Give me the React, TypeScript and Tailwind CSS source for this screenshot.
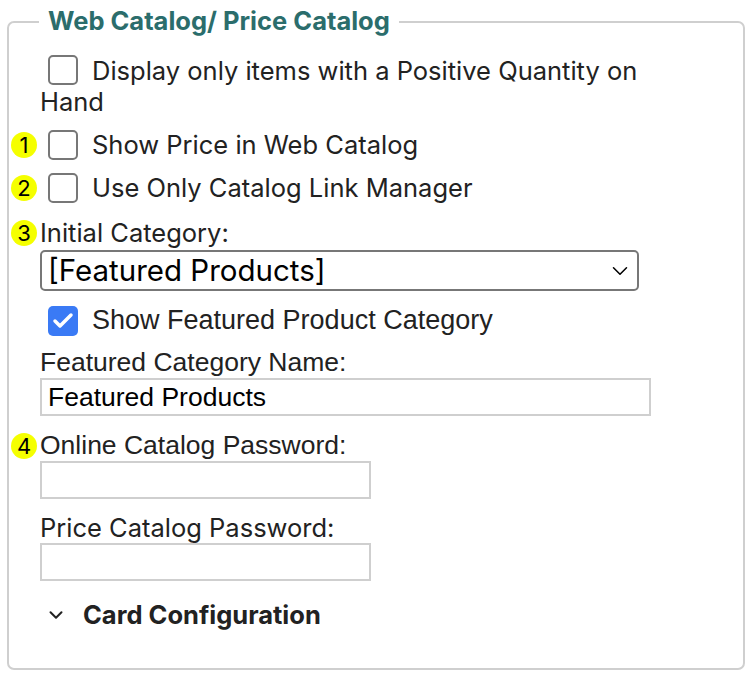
import { Check, ChevronDown } from 'lucide-react'

function Badge({ n }: { n: string }) {
  return (
    <span className="absolute -left-[29px] top-1/2 -translate-y-1/2 w-[26px] h-[26px] rounded-full bg-[#f5ff00] text-black text-[22px] leading-none flex items-center justify-center">
      {n}
    </span>
  )
}

function Box({ checked = false }: { checked?: boolean }) {
  return checked ? (
    <span className="inline-flex w-[30px] h-[30px] rounded-[5px] bg-[#3a7af5] items-center justify-center align-middle">
      <Check className="w-[24px] h-[24px] text-white" strokeWidth={3.5} />
    </span>
  ) : (
    <span className="inline-block w-[30px] h-[30px] rounded-[5px] border-2 border-[#777] bg-white align-middle" />
  )
}

export default function App() {
  return (
    <div className="min-h-screen bg-white text-[#222] font-['Inter',sans-serif] pt-[21px] pl-[7px] pr-[7px]">
      <div className="relative h-[649px] border-2 border-[#cfcfcf] rounded-[7px] pl-[31px] pr-4">
        {/* legend */}
        <div className="absolute left-[30px] -top-[17px] bg-white px-[9px] text-[25.5px] font-bold text-[#2b6d6c] leading-[30px]">
          Web Catalog/ Price Catalog
        </div>

        <div className="pt-[32px] text-[25.5px] leading-[31px]">
          <div className="pr-[60px]">
            <span className="inline-flex items-center ml-[8px] mr-[14px] -mt-[6px] align-middle">
              <Box />
            </span>
            Display only items with a Positive Quantity on Hand
          </div>

          <div className="relative flex items-center gap-[14px] ml-[8px] mt-[12px] h-[31px]">
            <span className="absolute -left-[8px] top-0 h-full w-0">
              <Badge n="1" />
            </span>
            <Box />
            <span>Show Price in Web Catalog</span>
          </div>

          <div className="relative flex items-center gap-[14px] ml-[8px] mt-[12px] h-[31px]">
            <span className="absolute -left-[8px] top-0 h-full w-0">
              <Badge n="2" />
            </span>
            <Box />
            <span>Use Only Catalog Link Manager</span>
          </div>

          <div className="relative mt-[14px] h-[31px] flex items-center">
            <span className="absolute left-0 top-0 h-full w-0">
              <Badge n="3" />
            </span>
            <span>Initial Category:</span>
          </div>

          <div className="mt-[2px] w-[599px] h-[41px] border-2 border-[#777] rounded-[5px] flex items-center justify-between pl-[6px] pr-[4px] text-[29.5px] text-black">
            <span>[Featured Products]</span>
            <ChevronDown className="w-[26px] h-[26px]" strokeWidth={1.4} />
          </div>

          <div className="flex items-center gap-[14px] ml-[8px] mt-[14px] h-[31px]">
            <Box checked />
            <span className="font-['Liberation_Sans',sans-serif] text-[27px]">
              Show Featured Product Category
            </span>
          </div>

          <div className="mt-[11px] h-[31px] flex items-center text-[26.5px] font-['Liberation_Sans',sans-serif]">
            Featured Category Name:
          </div>
          <div className="w-[611px] h-[38px] border-2 border-[#cfcfcf] flex items-center pl-[6px] text-[26.5px] text-black font-['Liberation_Sans',sans-serif]">
            Featured Products
          </div>

          <div className="relative mt-[14px] h-[31px] flex items-center">
            <span className="absolute left-0 top-0 h-full w-0">
              <Badge n="4" />
            </span>
            <span className="text-[26.5px] font-['Liberation_Sans',sans-serif]">Online Catalog Password:</span>
          </div>
          <div className="w-[331px] h-[38px] border-2 border-[#cfcfcf]" />

          <div className="mt-[13px] h-[31px] flex items-center">
            Price Catalog Password:
          </div>
          <div className="w-[331px] h-[38px] border-2 border-[#cfcfcf]" />

          <div className="mt-[18px] flex items-center gap-[16px] ml-[5px] h-[31px]">
            <ChevronDown className="w-[22px] h-[22px]" strokeWidth={2.2} />
            <span className="font-bold text-[25.5px]">Card Configuration</span>
          </div>
        </div>
      </div>
    </div>
  )
}
